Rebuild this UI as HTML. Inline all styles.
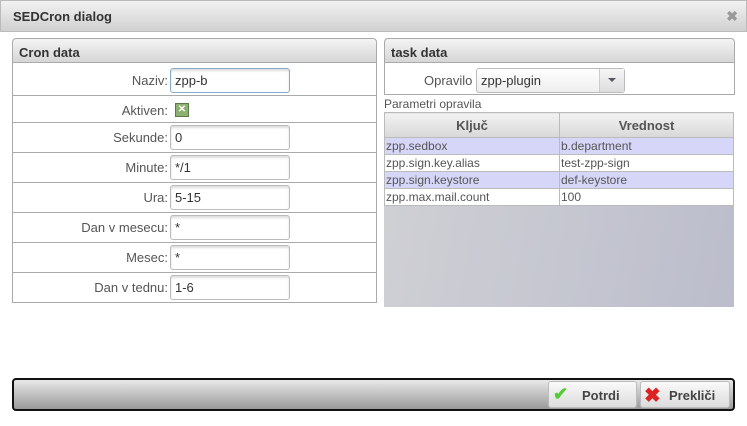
<!DOCTYPE html>
<html><head><style>
*{box-sizing:border-box;margin:0;padding:0}
body{width:747px;height:426px;background:#fff;font-family:"Liberation Sans",sans-serif;color:#444;position:relative;overflow:hidden;font-size:13px}
.a{position:absolute}
.tb{left:0;top:0;width:747px;height:32px;background:linear-gradient(#f2f2f2,#d0d0d0);border:1px solid #bbb;}
.tb b{position:absolute;left:12px;top:8px;font-size:13px;color:#333}
.hd{background:linear-gradient(#f4f4f4,#d6d6d6);border:1px solid #aaa;border-radius:4px 4px 0 0;font-weight:bold;font-size:13px;color:#333;padding:6px 6px}
.lbl{text-align:right;width:168px;left:0;font-size:13px;color:#555}
.inp{left:170px;width:120px;height:25px;border:1px solid #bbb;border-radius:3px;box-shadow:inset 0 2px 2px #ddd;font-size:13px;padding:4px 4px;color:#333;background:#fff}
.sep{left:12px;width:365px;height:1px;background:#aaa}
td,th{border:1px solid #bbb;font-size:12px;padding:0 1px;height:17px;line-height:15px;color:#555;font-weight:normal;text-align:left}
th{font-weight:bold;font-size:13px;text-align:center;background:linear-gradient(#f2f2f2,#d8d8d8);height:25px;color:#555}
.hl td{background:#d6d6f8}
.btn{top:381px;height:27px;border:1px solid #bbb;border-radius:3px;background:linear-gradient(#fafafa,#dcdcdc);font-weight:bold;font-size:13px;color:#444}
</style></head><body>
<div class="a tb"><b>SEDCron dialog</b><span class="a" style="right:8px;top:7px;color:#999;font-size:14px;font-weight:bold">✖</span></div>

<div class="a hd" style="left:12px;top:38px;width:365px;height:25px">Cron data</div>
<div class="a" style="left:12px;top:63px;width:365px;height:240px;border:1px solid #aaa;border-top:none"></div>
<div class="a sep" style="top:95px"></div>
<div class="a sep" style="top:122px"></div>
<div class="a sep" style="top:152px"></div>
<div class="a sep" style="top:182px"></div>
<div class="a sep" style="top:212px"></div>
<div class="a sep" style="top:242px"></div>
<div class="a sep" style="top:272px"></div>

<div class="a lbl" style="top:73px">Naziv:</div><div class="a inp" style="top:68px;border-color:#8aa8c8">zpp-b</div>
<div class="a lbl" style="top:103px">Aktiven:</div>
<div class="a" style="left:175px;top:103px;width:14px;height:14px;background:#8cb070;border:1px solid #5a7a4a;color:#fff;font-size:10px;line-height:12px;text-align:center;font-weight:bold">✕</div>
<div class="a lbl" style="top:130px">Sekunde:</div><div class="a inp" style="top:125px">0</div>
<div class="a lbl" style="top:160px">Minute:</div><div class="a inp" style="top:155px">*/1</div>
<div class="a lbl" style="top:190px">Ura:</div><div class="a inp" style="top:185px">5-15</div>
<div class="a lbl" style="top:220px">Dan v mesecu:</div><div class="a inp" style="top:215px">*</div>
<div class="a lbl" style="top:250px">Mesec:</div><div class="a inp" style="top:245px">*</div>
<div class="a lbl" style="top:280px">Dan v tednu:</div><div class="a inp" style="top:275px">1-6</div>

<div class="a hd" style="left:384px;top:38px;width:351px;height:25px">task data</div>
<div class="a" style="left:384px;top:63px;width:351px;height:32px;border:1px solid #aaa;border-top:none"></div>
<div class="a" style="left:424px;top:73px;font-size:13px;color:#555">Opravilo</div>
<div class="a" style="left:476px;top:68px;width:149px;height:25px;border:1px solid #bbb;border-radius:3px;background:linear-gradient(#fff,#eee);font-size:13px;padding:4px 4px;color:#333">zpp-plugin
<div class="a" style="right:0;top:0;width:25px;height:23px;border-left:1px solid #ccc;background:linear-gradient(#f6f6f6,#ddd)"><div class="a" style="left:8px;top:9px;border-left:4px solid transparent;border-right:4px solid transparent;border-top:4px solid #556"></div></div></div>
<div class="a" style="left:384px;top:97px;font-size:12px;color:#555">Parametri opravila</div>
<div class="a" style="left:384px;top:112px;width:350px;height:195px;background:linear-gradient(100deg,#d0d1d5,#bcbdcc)"></div>
<table class="a" style="left:384px;top:112px;width:350px;border-collapse:collapse;background:#fff">
<tr><th style="width:175px">Ključ</th><th>Vrednost</th></tr>
<tr class="hl"><td>zpp.sedbox</td><td>b.department</td></tr>
<tr><td>zpp.sign.key.alias</td><td>test-zpp-sign</td></tr>
<tr class="hl"><td>zpp.sign.keystore</td><td>def-keystore</td></tr>
<tr><td>zpp.max.mail.count</td><td>100</td></tr>
</table>

<div class="a" style="left:12px;top:378px;width:723px;height:33px;border:2px solid #111;border-radius:4px;background:linear-gradient(#e8e8e8,#9a9a9a)"></div>
<div class="a btn" style="left:548px;width:89px"><span class="a" style="left:4px;top:2px;color:#5c3;font-size:18px">✔</span><span class="a" style="left:33px;top:6px">Potrdi</span></div>
<div class="a btn" style="left:640px;width:90px"><span class="a" style="left:3px;top:1px;color:#d22;font-size:20px;font-weight:bold">✖</span><span class="a" style="left:28px;top:6px">Prekliči</span></div>
</body></html>
